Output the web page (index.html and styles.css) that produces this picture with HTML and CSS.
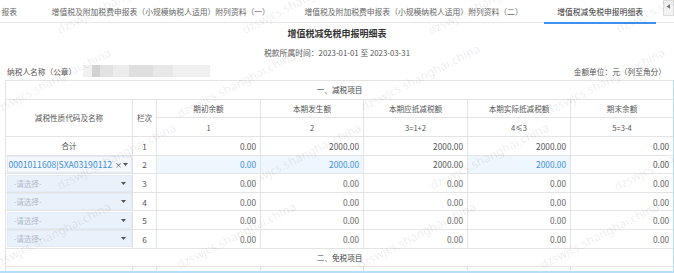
FILE: index.html
```html
<!DOCTYPE html>
<html lang="zh-CN">
<head>
<meta charset="utf-8">
<title>增值税减免税申报明细表</title>
<link rel="stylesheet" href="styles.css">
</head>
<body>
<div class="page">
  <div class="tabbar">
    <div class="tabs">
      <div class="tab first">报表</div>
      <div class="tab">增值税及附加税费申报表（小规模纳税人适用）附列资料（一）</div>
      <div class="tab">增值税及附加税费申报表（小规模纳税人适用）附列资料（二）</div>
      <div class="tab active">增值税减免税申报明细表</div>
    </div>
    <div class="tab-scroll"><svg width="5" height="5" viewBox="0 0 5 5"><path d="M0.5 2.5 L4 0.3 V4.7 Z" fill="#777"/></svg></div>
  </div>

  <h1 class="title">增值税减免税申报明细表</h1>
  <div class="period">税款所属时间：2023-01-01 至 2023-03-31</div>
  <div class="info">
    <div class="taxpayer"><span>纳税人名称（公章）</span><span class="blur"></span></div>
    <div class="unit">金额单位：元（列至角分）</div>
  </div>

  <div class="grid-wrap">
    <table class="grid">
      <colgroup>
        <col class="c-name"><col class="c-no"><col class="c-amt"><col class="c-amt2"><col class="c-amt"><col class="c-amt2"><col class="c-last">
      </colgroup>
      <tr class="section"><td colspan="7">一、减税项目</td></tr>
      <tr class="head">
        <th rowspan="2">减税性质代码及名称</th><th rowspan="2">栏次</th>
        <th>期初余额</th><th>本期发生额</th><th>本期应抵减税额</th><th>本期实际抵减税额</th><th>期末余额</th>
      </tr>
      <tr class="head"><th>1</th><th>2</th><th>3=1+2</th><th>4≤3</th><th>5=3-4</th></tr>
      <tr class="total">
        <td class="center">合计</td><td class="no">1</td>
        <td class="num">0.00</td><td class="num">2000.00</td><td class="num">2000.00</td><td class="num">2000.00</td><td class="num">0.00</td>
      </tr>
      <tr>
        <td class="sel-cell"><div class="select filled"><span class="val">0001011608|SXA031901123|其他</span><span class="clear">×</span><span class="arrow"><svg width="5" height="3" viewBox="0 0 5 3"><path d="M0 0 H5 L2.5 3 Z" fill="#555"/></svg></span></div></td>
        <td class="no">2</td>
        <td class="num edit">0.00</td><td class="num edit">2000.00</td><td class="num">2000.00</td><td class="num edit">2000.00</td><td class="num">0.00</td>
      </tr>
      <tr class="empty">
        <td class="sel-cell"><div class="select"><span class="val">-请选择-</span><span class="arrow"><svg width="5" height="3" viewBox="0 0 5 3"><path d="M0 0 H5 L2.5 3 Z" fill="#555"/></svg></span></div></td>
        <td class="no">3</td>
        <td class="num">0.00</td><td class="num">0.00</td><td class="num">0.00</td><td class="num">0.00</td><td class="num">0.00</td>
      </tr>
      <tr class="empty">
        <td class="sel-cell"><div class="select"><span class="val">-请选择-</span><span class="arrow"><svg width="5" height="3" viewBox="0 0 5 3"><path d="M0 0 H5 L2.5 3 Z" fill="#555"/></svg></span></div></td>
        <td class="no">4</td>
        <td class="num">0.00</td><td class="num">0.00</td><td class="num">0.00</td><td class="num">0.00</td><td class="num">0.00</td>
      </tr>
      <tr class="empty">
        <td class="sel-cell"><div class="select"><span class="val">-请选择-</span><span class="arrow"><svg width="5" height="3" viewBox="0 0 5 3"><path d="M0 0 H5 L2.5 3 Z" fill="#555"/></svg></span></div></td>
        <td class="no">5</td>
        <td class="num">0.00</td><td class="num">0.00</td><td class="num">0.00</td><td class="num">0.00</td><td class="num">0.00</td>
      </tr>
      <tr class="empty">
        <td class="sel-cell"><div class="select"><span class="val">-请选择-</span><span class="arrow"><svg width="5" height="3" viewBox="0 0 5 3"><path d="M0 0 H5 L2.5 3 Z" fill="#555"/></svg></span></div></td>
        <td class="no">6</td>
        <td class="num">0.00</td><td class="num">0.00</td><td class="num">0.00</td><td class="num">0.00</td><td class="num">0.00</td>
      </tr>
      <tr class="section"><td colspan="7">二、免税项目</td></tr>
      <tr class="head"><th></th><th></th><th></th><th></th><th></th><th></th><th></th></tr>
    </table>
  </div>

  <div class="watermarks" aria-hidden="true">
    <span class="wm a1">dzswjcs.shanghai.china</span>
    <span class="wm a2">dzswjcs.shanghai.china</span>
    <span class="wm a3">dzswjcs.shanghai.china</span>
    <span class="wm a4">dzswjcs.shanghai.china</span>
    <span class="wm b1">dzswjcs.shanghai.china</span>
    <span class="wm b2">dzswjcs.shanghai.china</span>
    <span class="wm b3">dzswjcs.shanghai.china</span>
    <span class="wm b4">dzswjcs.shanghai.china</span>
    <span class="wm c1">dzswjcs.shanghai.china</span>
    <span class="wm c2">dzswjcs.shanghai.china</span>
    <span class="wm c3">dzswjcs.shanghai.china</span>
    <span class="wm c4">dzswjcs.shanghai.china</span>
    <span class="wm d1">dzswjcs.shanghai.china</span>
    <span class="wm d2">dzswjcs.shanghai.china</span>
    <span class="wm d3">dzswjcs.shanghai.china</span>
    <span class="wm d4">dzswjcs.shanghai.china</span>
  </div>
</div>
</body>
</html>
```

FILE: styles.css
```css
* { box-sizing: border-box; }

html, body {
  margin: 0;
  padding: 0;
  background: #fff;
}

body {
  font-family: "Noto Sans CJK SC", "Noto Sans", sans-serif;
  color: #555;
}

.page {
  position: relative;
  width: 674px;
  height: 273px;
  overflow: hidden;
}

/* ---------- tabs ---------- */
.tabbar {
  display: flex;
  height: 23px;
  border-bottom: 1px solid #e8e8e8;
}

.tabs {
  flex: 1;
  display: flex;
  gap: 8.5px;
  min-width: 0;
}

.tab {
  flex: none;
  position: relative;
  padding: 0 13px;
  line-height: 23px;
  font-size: 7.8px;
  color: #666;
  white-space: nowrap;
}

.tab.first { margin-left: -11.5px; }

.tab.active { color: #333; }

.tab.active::after {
  content: "";
  position: absolute;
  left: 0;
  right: 0;
  bottom: -2px;
  height: 2px;
  background: #4090f0;
}

.tab-scroll {
  flex: none;
  align-self: flex-start;
  width: 11px;
  height: 16px;
  border: 1px solid #dcdcdc;
  background: #f3f3f3;
  display: flex;
  align-items: flex-start;
  justify-content: center;
  padding-top: 3px;
}

/* ---------- heading ---------- */
.title {
  margin: 0;
  font-size: 9px;
  font-weight: bold;
  color: #333;
  text-align: center;
  line-height: 21px;
}

.period {
  font-size: 7.8px;
  text-align: center;
  line-height: 18px;
  color: #555;
}

.info {
  display: flex;
  justify-content: space-between;
  align-items: center;
  height: 18px;
  padding: 0 8px 0 7px;
  font-size: 7.7px;
  color: #555;
}

.taxpayer {
  display: flex;
  align-items: center;
}

.blur {
  display: block;
  width: 127px;
  height: 12px;
  margin-left: 7px;
  background: linear-gradient(to right,
    #f1f1f1 0 9px, #d2d2d2 9px 17px, #e2e2e2 17px 30px,
    #ececec 30px 46px, #dfdfdf 46px 70px, #e8e8e8 70px 90px,
    #f0f0f0 90px 127px);
}

/* ---------- table ---------- */
.grid-wrap {
  height: 193px;
  padding-left: 5px;
  border-right: 1px solid #b8ddf6;
  border-bottom: 2px solid #b8ddf6;
  overflow: hidden;
}

.grid {
  table-layout: fixed;
  border-collapse: collapse;
  width: 668px;
  font-size: 7.6px;
  color: #555;
}

.c-name { width: 127px; }
.c-no { width: 24px; }
.c-amt { width: 104px; }
.c-amt2 { width: 103px; }
.c-last { width: 103px; }

.grid tr { height: 18.65px; }

.grid td, .grid th {
  border: 1px solid #e4e4e4;
  padding: 0 4px;
  font-weight: normal;
  white-space: nowrap;
  overflow: hidden;
}

.grid th { text-align: center; color: #555; }

.section td { text-align: center; color: #444; }

.center { text-align: center; }

.no { text-align: center; font-size: 8.2px; }

.num { text-align: right; font-size: 8.3px; }

.num.edit {
  background: #eef6fe;
  color: #3b8fe2;
}

.empty .num { color: #666; }

.sel-cell { padding: 0 !important; }

.select {
  display: flex;
  align-items: center;
  height: 17px;
  margin: 0 0.5px;
  padding: 0 5px 0 6px;
  background: #e9f1fb;
  border: 1px solid #e2eaf6;
}

.select .val {
  flex: 1;
  min-width: 0;
  overflow: hidden;
  white-space: nowrap;
  color: #b3bccb;
}

.select.filled {
  background: #f4f8fd;
  padding-left: 1px;
}

.select.filled .val {
  color: #3b8fe2;
  flex: none;
  width: 104px;
  font-size: 8.6px;
}

.select .clear {
  flex: none;
  width: 8px;
  margin-left: 2px;
  text-align: center;
  color: #555;
  font-size: 7.5px;
}

.select .arrow {
  flex: none;
  margin-left: auto;
  display: flex;
  align-items: center;
}

/* ---------- watermark overlay ---------- */
.watermarks {
  position: absolute;
  inset: 0;
  pointer-events: none;
}

.wm {
  position: absolute;
  font-family: "Noto Sans", sans-serif;
  font-size: 12px;
  line-height: 12px;
  color: rgba(0, 0, 0, 0.085);
  white-space: nowrap;
  transform-origin: 0 10.7px;
  transform: rotate(-27deg);
}

.a1 { left: 60px;  top: 24px; }
.a2 { left: 245px; top: 24px; }
.a3 { left: 431px; top: 25px; }
.a4 { left: 619px; top: 23px; }
.b1 { left: -5px;  top: 105px; }
.b2 { left: 180px; top: 108px; }
.b3 { left: 364px; top: 101px; }
.b4 { left: 549px; top: 105px; }
.c1 { left: 60px;  top: 180px; }
.c2 { left: 245px; top: 180px; }
.c3 { left: 433px; top: 180px; }
.c4 { left: 617px; top: 181px; }
.d1 { left: -5px;  top: 259px; }
.d2 { left: 180px; top: 259px; }
.d3 { left: 360px; top: 259px; }
.d4 { left: 543px; top: 259px; }
```
